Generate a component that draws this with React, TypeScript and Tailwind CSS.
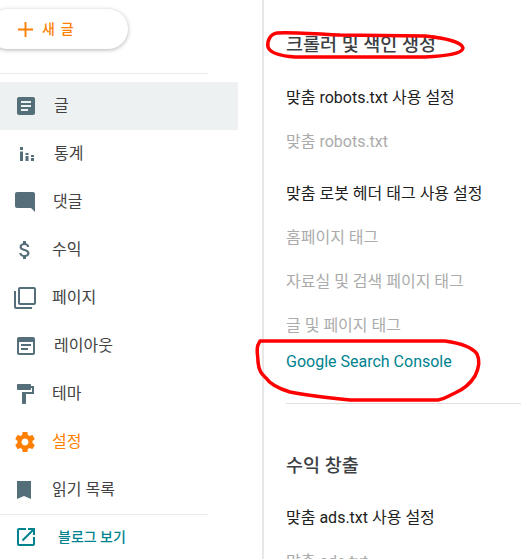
import type { ReactNode } from "react";

const FONT = "font-['Roboto','Noto_Sans_CJK_KR',sans-serif]";

const ICONS: Record<string, ReactNode> = {
  posts: <path d="M19 3H5c-1.1 0-2 .9-2 2v14c0 1.1.9 2 2 2h14c1.1 0 2-.9 2-2V5c0-1.1-.9-2-2-2zm-5 14H7v-2h7v2zm3-4H7v-2h10v2zm0-4H7V7h10v2z" />,
  stats: <path d="M6 5h3v3H6zM6 9.500h3V19H6zM11.500 11h3v2h-3zM11.500 14h3v5h-3zM17 13h3v2h-3zM17 16h3v3h-3z" />,
  comments: <path d="M21.99 4c0-1.1-.89-2-1.99-2H4c-1.1 0-2 .9-2 2v12c0 1.1.9 2 2 2h14l4 4-.01-18z" />,
  earnings: <path d="M11.8 10.9c-2.27-.59-3-1.2-3-2.15 0-1.09 1.01-1.85 2.7-1.85 1.78 0 2.44.85 2.5 2.1h2.21c-.07-1.72-1.12-3.3-3.21-3.81V3h-3v2.16c-1.94.42-3.5 1.68-3.5 3.61 0 2.31 1.91 3.46 4.7 4.13 2.5.6 3 1.48 3 2.41 0 .69-.49 1.79-2.7 1.79-2.06 0-2.87-.92-2.98-2.1h-2.2c.12 2.19 1.76 3.42 3.68 3.83V21h3v-2.15c1.95-.37 3.5-1.5 3.5-3.55 0-2.84-2.43-3.81-4.7-4.4z" />,
  pages: <path d="M3 5H1v16c0 1.1.9 2 2 2h16v-2H3V5zm18-4H7c-1.1 0-2 .9-2 2v14c0 1.1.9 2 2 2h14c1.1 0 2-.9 2-2V3c0-1.1-.9-2-2-2zm0 16H7V3h14v14z" />,
  layout: <path d="M19 3H5c-1.1 0-2 .9-2 2v14c0 1.1.9 2 2 2h14c1.100 0 2-.9 2-2V5c0-1.100-.9-2-2-2zm0 16H5V8h14v11zM7 10h10v2H7zm0 4h7v2H7z" />,
  theme: <path d="M18 4V3c0-.55-.45-1-1-1H5c-.55 0-1 .45-1 1v4c0 .55.45 1 1 1h12c.55 0 1-.45 1-1V6h1v4H9v11c0 .55.45 1 1 1h2c.55 0 1-.45 1-1v-9h8V4h-3z" />,
  settings: <path d="M19.43 12.98c.04-.32.07-.64.07-.98s-.03-.66-.07-.98l2.11-1.65c.19-.15.24-.42.12-.64l-2-3.46c-.12-.22-.39-.3-.61-.22l-2.49 1c-.52-.4-1.08-.73-1.69-.98l-.38-2.65C14.46 2.18 14.25 2 14 2h-4c-.25 0-.46.18-.49.42l-.38 2.65c-.61.25-1.17.59-1.69.98l-2.49-1c-.23-.09-.49 0-.61.22l-2 3.46c-.13.22-.07.49.12.64l2.11 1.65c-.04.32-.07.65-.07.98s.03.66.07.98l-2.11 1.65c-.19.15-.24.42-.12.64l2 3.46c.12.22.39.3.61.22l2.49-1c.52.4 1.08.73 1.69.98l.38 2.65c.03.24.24.42.49.42h4c.25 0 .46-.18.49-.42l.38-2.65c.61-.25 1.17-.59 1.69-.98l2.49 1c.23.09.49 0 .61-.22l2-3.46c.12-.22.07-.49-.12-.64l-2.11-1.65zM12 15.500c-1.930 0-3.500-1.570-3.500-3.500s1.570-3.500 3.500-3.500 3.500 1.570 3.500 3.500-1.570 3.500-3.500 3.500z" />,
  reading: <path d="M5 3h14v18l-7-3-7 3z" />,
  open: <path d="M19 19H5V5h7V3H5c-1.110 0-2 .9-2 2v14c0 1.100.89 2 2 2h14c1.100 0 2-.9 2-2v-7h-2v7zM14 3v2h3.590l-9.830 9.830 1.410 1.410L19 6.410V10h2V3h-7z" />,
};

const NAV = [
  { icon: "posts", label: "글", iconBox: "ml-[14px]", gap: "ml-[16px]", active: true },
  { icon: "stats", label: "통계", iconBox: "ml-[14px]", gap: "ml-[16px]" },
  { icon: "comments", label: "댓글", iconBox: "ml-[13px]", gap: "ml-[16px]" },
  { icon: "earnings", label: "수익", iconBox: "ml-[13px]", gap: "ml-[15px]" },
  { icon: "pages", label: "페이지", iconBox: "ml-[13px]", gap: "ml-[15px]" },
  { icon: "layout", label: "레이아웃", iconBox: "ml-[14px]", gap: "ml-[16px]" },
  { icon: "theme", label: "테마", iconBox: "ml-[13px]", gap: "ml-[15px]" },
  { icon: "settings", label: "설정", iconBox: "ml-[13px]", gap: "ml-[15px]", orange: true },
  { icon: "reading", label: "읽기 목록", iconBox: "ml-[12px]", gap: "ml-[16px]" },
];

function Icon({ name, className }: { name: string; className: string }) {
  return (
    <svg viewBox="0 0 24 24" className={`h-6 w-6 shrink-0 fill-current ${className}`}>
      {ICONS[name]}
    </svg>
  );
}

function Row({ children, tone }: { children: string; tone: "on" | "off" | "link" }) {
  const color = tone === "on" ? "text-[#212121]" : tone === "off" ? "text-[#ababab]" : "text-[#00838f]";
  return <div className={`flex h-11 items-center text-[16px] ${color}`}>{children}</div>;
}

function Heading({ children }: { children: string }) {
  return <h2 className="flex h-6 items-center text-[18.500px] font-medium text-[#3c4043]">{children}</h2>;
}

export default function App() {
  return (
    <div className={`relative flex h-[559px] w-[521px] overflow-hidden bg-white ${FONT}`}>
      <aside className="h-full w-[264px] shrink-0 border-r-2 border-[#e8e8e8] bg-white">
        <div className="pt-[9px]">
          <button className="-ml-3 flex h-10 w-[140px] items-center rounded-full bg-white pl-[30px] text-[14px] font-medium text-[#ff7f00] shadow-[0_1px_4px_rgba(0,0,0,0.3)]">
            <svg viewBox="0 0 24 24" className="mr-[9px] h-[15px] w-[15px] fill-current">
              <path d="M10.500 0h3v10.500H24v3H13.500V24h-3V13.500H0v-3h10.500z" />
            </svg>
            <span className="tracking-[1.200px]">새 글</span>
          </button>
        </div>
        <div className="mt-6 h-px w-52 bg-[#e8eaed]" />
        <nav className="mt-2">
          {NAV.map((item) => (
            <div
              key={item.label}
              className={`flex h-12 w-[238px] items-center text-[16px] ${item.active ? "bg-[#eef1f2]" : ""} ${item.orange ? "text-[#ff7f00]" : "text-[#424242]"}`}
            >
              <Icon name={item.icon} className={`${item.iconBox} ${item.orange ? "text-[#ff7f00]" : "text-[#546e7a]"}`} />
              <span className={item.gap}>{item.label}</span>
            </div>
          ))}
        </nav>
        <div className="h-px w-52 bg-[#e8eaed]" />
        <div className="flex h-11 items-center text-[14px] font-medium text-[#00838f]">
          <Icon name="open" className="ml-[14px]" />
          <span className="ml-[20px]">블로그 보기</span>
        </div>
      </aside>

      <main className="min-w-0 flex-1 pl-[22px] pt-[34px]">
        <Heading>크롤러 및 색인 생성</Heading>
        <div className="mt-[18px]">
          <Row tone="on">맞춤 robots.txt 사용 설정</Row>
          <Row tone="off">맞춤 robots.txt</Row>
          <div className="h-2" />
          <Row tone="on">맞춤 로봇 헤더 태그 사용 설정</Row>
          <Row tone="off">홈페이지 태그</Row>
          <Row tone="off">자료실 및 검색 페이지 태그</Row>
          <Row tone="off">글 및 페이지 태그</Row>
          <div className="-mt-2">
            <Row tone="link">Google Search Console</Row>
          </div>
        </div>
        <div className="mt-[19px] h-px bg-[#e0e0e0]" />
        <div className="mt-[51px]">
          <Heading>수익 창출</Heading>
        </div>
        <div className="mt-[17px]">
          <Row tone="on">맞춤 ads.txt 사용 설정</Row>
          <Row tone="off">맞춤 ads.txt</Row>
        </div>
      </main>

      {/* red marker scribbles drawn over the screenshot */}
      <svg viewBox="0 0 521 559" className="pointer-events-none absolute left-0 top-0 h-[559px] w-[521px]" fill="none" stroke="#f00" strokeWidth="3.500" strokeLinejoin="round">
        <path d="M277 33C270 34 267 41 268 47C270 53 280 56 295 57L425 57C445 56 462 54 463 48C462 42 445 38 425 36L340 35C320 34 290 32 277 33Z" />
        <path d="M259 343L260 341L445 341C460 343 472 347 477 354C480 360 479 368 475 376C470 384 462 390 455 393C448 396 445 399 438 400L350 400C330 398 310 396 290 392C280 389 270 384 266 378C262 374 259 372 258 362C258 355 256 350 258 345Z" />
      </svg>
    </div>
  );
}
